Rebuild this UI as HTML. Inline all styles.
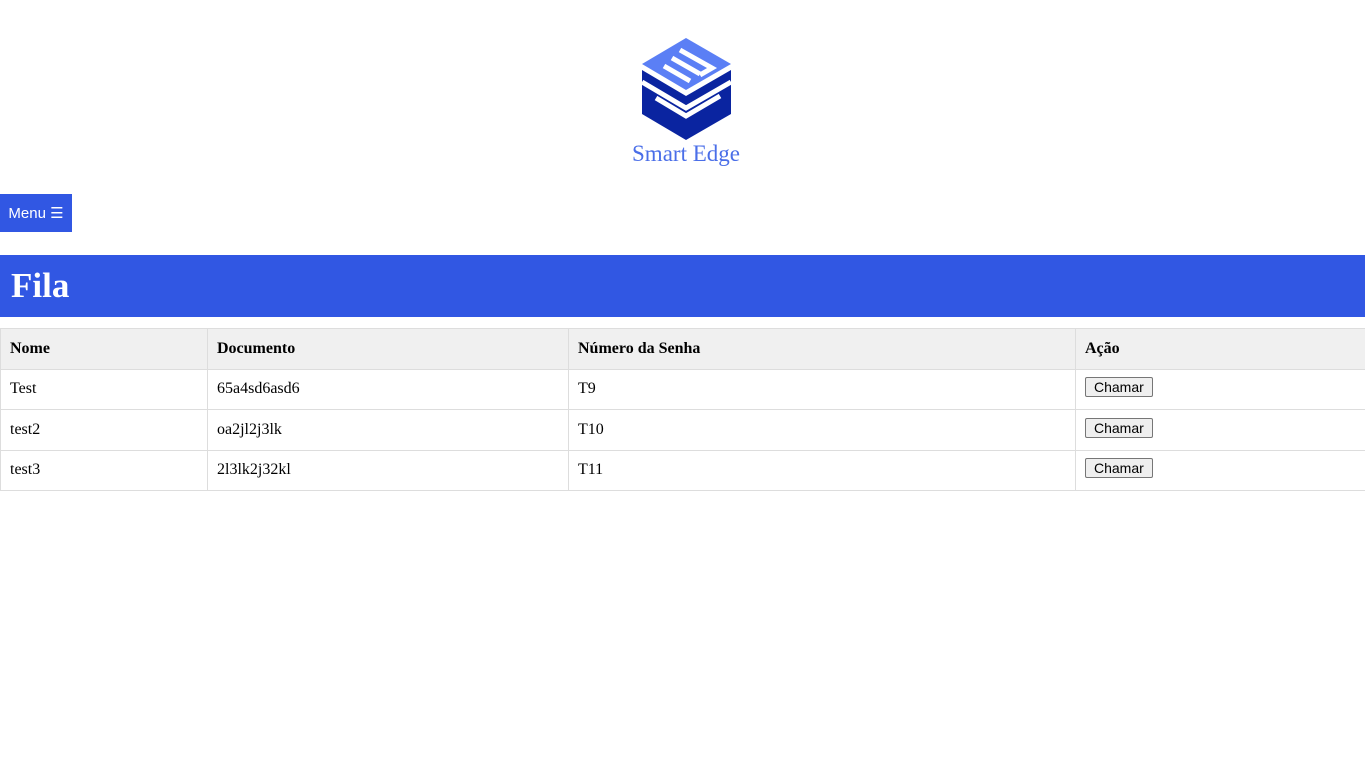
<!DOCTYPE html>
<html><head><meta charset="utf-8"><style>
body{margin:0;background:#fff;font-family:"Liberation Serif",serif;width:1365px;height:767px;overflow:hidden;position:relative}
.logo{position:absolute;left:620px;top:30px}
.menu{position:absolute;left:0;top:194px;width:72px;height:38px;background:#3157e3;color:#fff;font:15px "Liberation Sans",sans-serif;line-height:40px;text-align:center}
.fila{position:absolute;left:0;top:255px;width:1365px;height:62px;background:#3157e3;color:#fff;font-weight:bold;font-size:35px;line-height:62px;box-sizing:border-box;padding-left:11px}
table{position:absolute;left:0;top:328px;width:1366px;border-collapse:collapse;font-size:16px}
td,th{border:1px solid #ddd;padding:0 9px;height:39.5px;text-align:left}
th{background:#f0f0f0}
col.a{width:207px}col.b{width:361px}col.c{width:507px}
button{font:14px "Liberation Sans",sans-serif;padding:1px 8px;background:#efefef;border:1px solid #767676;border-radius:2px;color:#000;position:relative;top:-2px}
</style></head><body>
<svg class="logo" width="130" height="140" viewBox="620 30 130 140">
<polygon points="686,38 731,64 686,90 642,64" fill="#5b7ff5"/>
<polygon points="642,70 686,96 686,140 642,114" fill="#0a24a0"/>
<polygon points="731,70 686,96 686,140 731,114" fill="#0a24a0"/>
<g stroke="#fff" stroke-width="5" fill="none">
<polyline points="672,58 700,74"/>
<polyline points="664,66 690,81"/>
<polyline points="680,50 712,68 700,75"/>
<polyline points="642,82 686,108 731,82"/>
<polyline points="656,98 686,116 720,96"/>
</g>
<text x="686" y="161" text-anchor="middle" font-family="Liberation Serif,serif" font-size="23" fill="#4a6ee8">Smart Edge</text>
</svg>
<div class="menu">Menu ☰</div>
<div class="fila">Fila</div>
<table><colgroup><col class="a"><col class="b"><col class="c"><col></colgroup>
<tr><th>Nome</th><th>Documento</th><th>Número da Senha</th><th>Ação</th></tr>
<tr><td>Test</td><td>65a4sd6asd6</td><td>T9</td><td><button>Chamar</button></td></tr>
<tr><td>test2</td><td>oa2jl2j3lk</td><td>T10</td><td><button>Chamar</button></td></tr>
<tr><td>test3</td><td>2l3lk2j32kl</td><td>T11</td><td><button>Chamar</button></td></tr>
</table>
</body></html>
